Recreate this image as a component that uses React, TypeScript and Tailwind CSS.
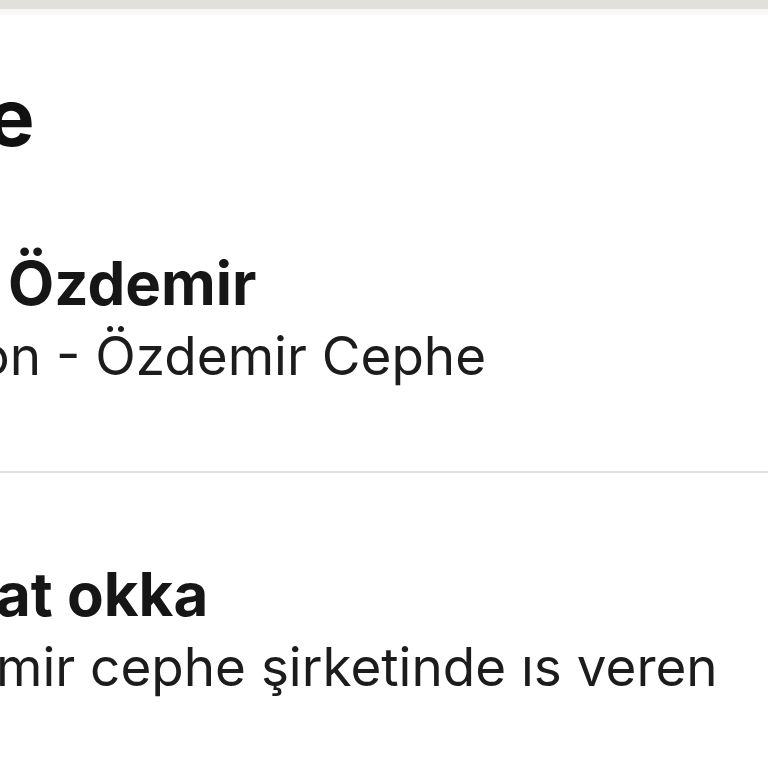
import React from "react";

export default function App() {
  const font = { fontFamily: "Inter, 'Noto Sans', sans-serif" };
  return (
    <div className="w-[768px] h-[768px] overflow-hidden bg-white" style={font}>
      <div className="h-[9px] bg-[#e3dfdb]" />
      <div className="h-[6px] bg-[#faf8f4]" />
      <div className="mt-[62px] ml-[-13px] whitespace-nowrap text-[80px] leading-none font-bold text-[#111111]">
        e
      </div>
      <div className="mt-[96px] ml-[8px] whitespace-nowrap text-[60px] leading-none font-bold text-[#161616]">
        Özdemir
      </div>
      <div className="mt-[17px] ml-[-22px] whitespace-nowrap text-[53px] leading-none text-[#1c1c1c]">
        on - Özdemir Cephe
      </div>
      <div className="mt-[88px] h-[2px] bg-[#e0e0e0]" />
      <div className="mt-[91px] ml-[-4px] whitespace-nowrap text-[60px] leading-none font-bold text-[#161616]">
        at okka
      </div>
      <div className="mt-[17px] ml-[-4px] whitespace-nowrap text-[53px] leading-none text-[#1c1c1c]">
        mir cephe şirketinde ıs veren
      </div>
    </div>
  );
}
